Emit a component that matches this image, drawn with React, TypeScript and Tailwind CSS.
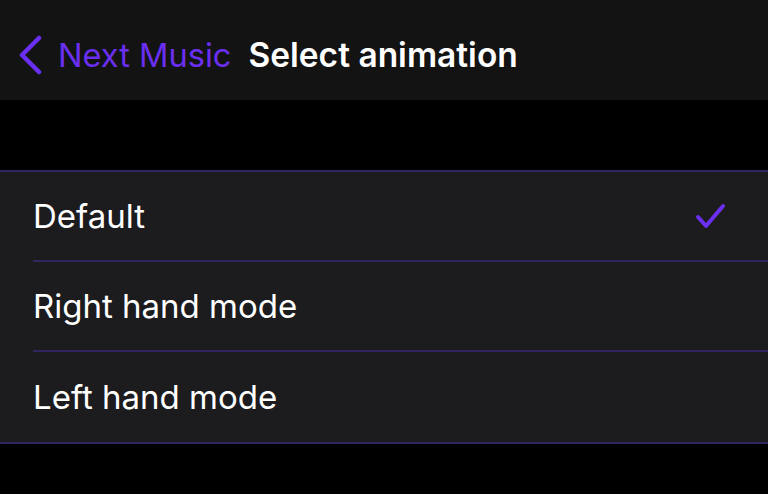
import * as React from "react";

const options = ["Default", "Right hand mode", "Left hand mode"];

function Check() {
  return (
    <svg width="34" height="30" viewBox="0 0 34 30" fill="none">
      <path
        d="M4 16 L12 25 L29 5"
        stroke="#6a2ff0"
        strokeWidth="4"
        strokeLinecap="round"
        strokeLinejoin="round"
      />
    </svg>
  );
}

export default function App() {
  const [selected, setSelected] = React.useState(0);

  return (
    <div
      className="w-[768px] h-[494px] bg-black overflow-hidden"
      style={{ fontFamily: "Inter, 'Noto Sans', sans-serif" }}
    >
      <header className="h-[100px] bg-[#131313] flex items-center pl-[18px] pt-[10px]">
        <svg width="26" height="40" viewBox="0 0 26 40" fill="none">
          <path
            d="M21 3 L4 20 L21 37"
            stroke="#6a2ff0"
            strokeWidth="4.5"
            strokeLinecap="round"
            strokeLinejoin="round"
          />
        </svg>
        <span className="ml-[14px] text-[32.6px] text-[#6a2ff0]">
          Next Music
        </span>
        <span className="ml-[17px] text-[33.5px] font-semibold text-white">
          Select animation
        </span>
      </header>

      <div className="mt-[70px] bg-[#1c1c1e] border-y-2 border-[#32245f]">
        {options.map((label, i) => (
          <button
            key={label}
            onClick={() => setSelected(i)}
            className="w-full h-[90px] flex items-center pl-[33px] text-left"
          >
            <div
              className={
                "flex-1 h-full flex items-center pr-[40px] " +
                (i < options.length - 1 ? "border-b-2 border-[#32245f]" : "")
              }
            >
              <span className="flex-1 text-[33px] text-white pt-[2px]">
                {label}
              </span>
              {selected === i && <Check />}
            </div>
          </button>
        ))}
      </div>
    </div>
  );
}
